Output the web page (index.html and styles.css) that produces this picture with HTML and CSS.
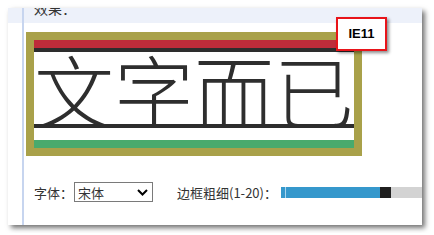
FILE: index.html
```html
<!DOCTYPE html>
<html lang="zh-CN">
<head>
    <meta charset="UTF-8">
    <title>边框粗细</title>
    <link rel="stylesheet" href="styles.css">
</head>
<body>

    <div class="panel">
        <div class="gutter"></div>

        <div class="main">
            <div class="titlebar"><span class="title">效果：</span></div>

            <!-- demo box -->
            <div class="demo">
                <div class="demo-inner">
                    <div class="rule"></div>
                    <div class="words">文字而已</div>
                    <div class="rule"></div>
                </div>
            </div>

            <!-- controls -->
            <div class="controls">
                <span class="label">字体：</span>
                <div class="select">
                    <span>宋体</span>
                    <svg class="chevron" width="11" height="7" viewBox="0 0 11 7">
                        <path d="M1 1 L5.5 5.5 L10 1" fill="none" stroke="#000" stroke-width="2"/>
                    </svg>
                </div>
                <span class="label label-width">边框粗细(1-20)：</span>
                <div class="range">
                    <div class="range-fill" style="width: 99px"></div>
                    <div class="range-thumb"></div>
                    <div class="range-rest"></div>
                </div>
            </div>
        </div>

        <div class="badge">IE11</div>
    </div>

</body>
</html>
```

FILE: styles.css
```css
body {
    margin: 0;
    background-color: #fff;
    font-family: "Noto Sans CJK SC", "Noto Sans", sans-serif;
    color: #333;
}

.panel {
    position: relative;
    display: flex;
    width: 414px;
    height: 217px;
    margin: 8px;
    overflow: hidden;
    background-color: #fff;
    box-shadow: 3px 3px 5px rgba(0, 0, 0, 0.55);
}

/* left strip before the blue rule */
.gutter {
    width: 14px;
    flex-shrink: 0;
    background: linear-gradient(#edf1fa 15px, #fff 15px);
}

.main {
    flex: 1;
    min-width: 0;
    border-left: 2px solid #c7d5ef;
}

.titlebar {
    height: 15px;
    overflow: hidden;
    background-color: #edf1fa;
    padding-left: 10px;
}

.title {
    display: block;
    margin-top: -10px;
    font-size: 14px;
    line-height: 20px;
}

/* the demo box */
.demo {
    width: 320px;
    margin: 9px 0 0 2px;
    border: 8px solid #a9a14a;
}

.demo-inner {
    border-top: 8px solid #be2c3a;
    border-bottom: 8px solid #49aa6d;
    padding-bottom: 12px;
}

.rule {
    height: 4px;
    background-color: #2d2d2d;
}

.words {
    height: 72px;
    overflow: hidden;
    font-size: 80px;
    line-height: 72px;
    font-weight: 300;
    white-space: nowrap;
    color: #2e2e2e;
}

/* controls row */
.controls {
    display: flex;
    align-items: center;
    height: 20px;
    margin-top: 26px;
    padding-left: 10px;
    font-size: 13px;
}

.label {
    white-space: nowrap;
    flex-shrink: 0;
}

.label-width {
    margin-left: 24px;
}

.select {
    display: flex;
    flex-shrink: 0;
    align-items: center;
    justify-content: space-between;
    width: 70px;
    height: 18px;
    border: 1px solid #7a7a7a;
    padding: 0 4px 0 3px;
    margin-left: 1px;
}

.chevron {
    display: block;
}

.range {
    display: flex;
    flex-shrink: 0;
    width: 170px;
    height: 11px;
    margin-left: 4px;
}

.range-fill {
    background-color: #3598cc;
    position: relative;
}

/* thin highlight near the start of the track */
.range-fill::before {
    content: "";
    position: absolute;
    left: 4px;
    top: 0;
    width: 1px;
    height: 100%;
    background-color: #a9d5ef;
}

.range-thumb {
    width: 11px;
    background-color: #1f1f1f;
}

.range-rest {
    flex: 1;
    background-color: #d3d3d3;
}

/* browser tag in the corner */
.badge {
    position: absolute;
    left: 328px;
    top: 9px;
    width: 47px;
    height: 30px;
    border: 2px solid #e8141a;
    background-color: #fff;
    box-shadow: 2px 2px 3px rgba(0, 0, 0, 0.45);
    font-family: "Liberation Sans", Arial, sans-serif;
    font-weight: bold;
    font-size: 13px;
    line-height: 30px;
    text-align: center;
    color: #000;
}
```
